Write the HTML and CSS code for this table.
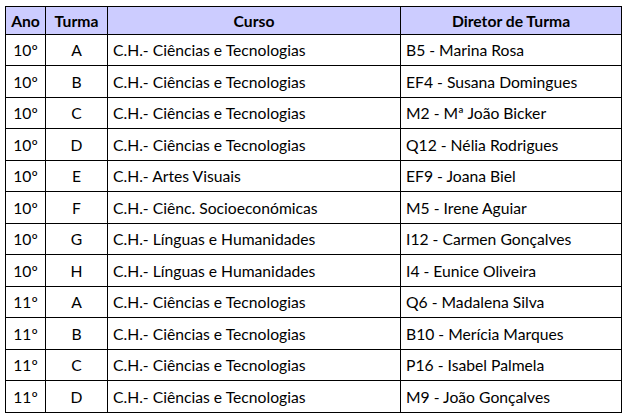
FILE: index.html
```html
<!DOCTYPE html>
<html lang="pt">
<head>
<meta charset="utf-8">
<link rel="stylesheet" href="styles.css">
</head>
<body>
<table class="turmas">
  <colgroup>
    <col class="c-ano"><col class="c-turma"><col class="c-curso"><col class="c-dir">
  </colgroup>
  <thead>
    <tr class="head"><th>Ano</th><th>Turma</th><th>Curso</th><th>Diretor de Turma</th></tr>
  </thead>
  <tbody>
    <tr class="r-a"><td class="ctr">10º</td><td class="ctr">A</td><td>C.H.- Ciências e Tecnologias</td><td>B5 - Marina Rosa</td></tr>
    <tr class="r-b"><td class="ctr">10º</td><td class="ctr">B</td><td>C.H.- Ciências e Tecnologias</td><td>EF4 - Susana Domingues</td></tr>
    <tr class="r-a"><td class="ctr">10º</td><td class="ctr">C</td><td>C.H.- Ciências e Tecnologias</td><td>M2 - Mª João Bicker</td></tr>
    <tr class="r-b"><td class="ctr">10º</td><td class="ctr">D</td><td>C.H.- Ciências e Tecnologias</td><td>Q12 - Nélia Rodrigues</td></tr>
    <tr class="r-a"><td class="ctr">10º</td><td class="ctr">E</td><td>C.H.- Artes Visuais</td><td>EF9 - Joana Biel</td></tr>
    <tr class="r-b"><td class="ctr">10º</td><td class="ctr">F</td><td>C.H.- Ciênc. Socioeconómicas</td><td>M5 - Irene Aguiar</td></tr>
    <tr class="r-a"><td class="ctr">10º</td><td class="ctr">G</td><td>C.H.- Línguas e Humanidades</td><td>I12 - Carmen Gonçalves</td></tr>
    <tr class="r-b"><td class="ctr">10º</td><td class="ctr">H</td><td>C.H.- Línguas e Humanidades</td><td>I4 - Eunice Oliveira</td></tr>
    <tr class="r-a"><td class="ctr">11º</td><td class="ctr">A</td><td>C.H.- Ciências e Tecnologias</td><td>Q6 - Madalena Silva</td></tr>
    <tr class="r-b"><td class="ctr">11º</td><td class="ctr">B</td><td>C.H.- Ciências e Tecnologias</td><td>B10 - Merícia Marques</td></tr>
    <tr class="r-a"><td class="ctr">11º</td><td class="ctr">C</td><td>C.H.- Ciências e Tecnologias</td><td>P16 - Isabel Palmela</td></tr>
    <tr class="r-b"><td class="ctr">11º</td><td class="ctr">D</td><td>C.H.- Ciências e Tecnologias</td><td>M9 - João Gonçalves</td></tr>
  </tbody>
</table>
</body>
</html>
```
FILE: styles.css
```css
html, body {
  margin: 0;
  padding: 0;
  background: #ffffff;
}
body {
  padding: 6px 0 0 5px;
  font-family: Lato, "Open Sans", sans-serif;
  font-size: 15.7px;
  color: #000;
}
.turmas {
  border-collapse: collapse;
  table-layout: fixed;
  width: 616px;
}
.c-ano { width: 40px; }
.c-turma { width: 62px; }
.c-curso { width: 293px; }
.c-dir { width: 221px; }
.turmas th,
.turmas td {
  border: 1px solid #000;
  padding: 0 5px;
  text-align: left;
  vertical-align: middle;
  white-space: nowrap;
  overflow: hidden;
}
.turmas th {
  background: #ccccff;
  font-weight: 700;
  text-align: center;
}
.turmas td.ctr { text-align: center; }
.head { height: 28px; }
.r-a { height: 31px; }
.r-b { height: 32px; }
```
